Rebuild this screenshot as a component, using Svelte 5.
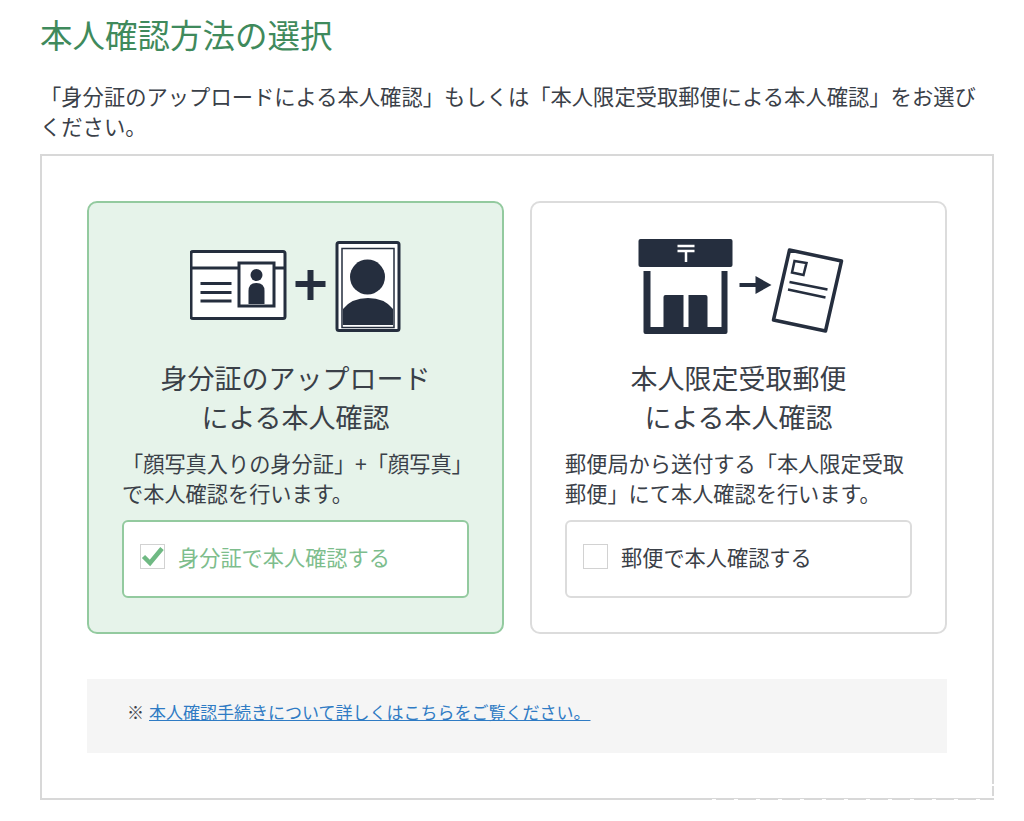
<script>
  const options = [
    {
      title: ['身分証のアップロード', 'による本人確認'],
      desc: ['「顔写真入りの身分証」+「顔写真」', 'で本人確認を行います。'],
      label: '身分証で本人確認する',
      checked: true
    },
    {
      title: ['本人限定受取郵便', 'による本人確認'],
      desc: ['郵便局から送付する「本人限定受取', '郵便」にて本人確認を行います。'],
      label: '郵便で本人確認する',
      checked: false
    }
  ];
</script>

<main class="page">
  <h1>本人確認方法の選択</h1>
  <p class="lead">「身分証のアップロードによる本人確認」もしくは「本人限定受取郵便による本人確認」をお選びください。</p>

  <section class="panel">
    <div class="cards">
      {#each options as opt}
        <div class="card" class:active={opt.checked}>
          <div class="icon">
            {#if opt.checked}
              <svg width="212" height="96" viewBox="190.500 238 212 96">
                <rect x="191.500" y="251.500" width="94" height="67" rx="2" fill="#fff" stroke="#252e3e" stroke-width="3" />
                <path d="M191 268H286" stroke="#252e3e" stroke-width="3" />
                <rect x="239.500" y="263" width="35" height="43" fill="#fff" stroke="#252e3e" stroke-width="3" />
                <circle cx="257" cy="275" r="6" fill="#252e3e" />
                <path d="M249 304V291q0-8 8-8t8 8V304Z" fill="#252e3e" />
                <path d="M201 283.500H232M201 292.500H232M201 301H232" stroke="#252e3e" stroke-width="3" />
                <path d="M296 284H326M311 270V300" stroke="#252e3e" stroke-width="6" />
                <rect x="337.500" y="242.500" width="62" height="88" rx="2" fill="#fff" stroke="#252e3e" stroke-width="3" />
                <rect x="342.500" y="248.500" width="52" height="79" fill="none" stroke="#252e3e" stroke-width="1.500" />
                <circle cx="368" cy="277" r="17.500" fill="#252e3e" />
                <path d="M343.500 325V309Q352 298 368.500 298T393.500 309V325Z" fill="#252e3e" />
              </svg>
            {:else}
              <svg width="212" height="96" viewBox="632.500 238 212 96">
                <rect x="638" y="239" width="94" height="28" rx="2" fill="#252e3e" />
                <path d="M677 246H694M677 251H694M685.500 251V262" stroke="#fff" stroke-width="2.500" fill="none" />
                <path d="M643 271H650V327H663V297q0-2 2-2H683V327H688V295H705q2 0 2 2V327H721V271H727V332q0 2-2 2H645q-2 0-2-2Z" fill="#252e3e" />
                <path d="M739 285H757" stroke="#252e3e" stroke-width="4" />
                <path d="M755 276L771 285L755 294Z" fill="#252e3e" />
                <path d="M789 250L841 261L825 331L773 320Z" fill="#fff" stroke="#252e3e" stroke-width="3.500" stroke-linejoin="round" />
                <path d="M794 261L806 263L803 275L791.500 272.500Z" fill="none" stroke="#252e3e" stroke-width="2.500" />
                <path d="M789 282L827 289.500M787.500 289.500L825 297.500" stroke="#252e3e" stroke-width="2.500" />
              </svg>
            {/if}
          </div>
          <h2>{opt.title[0]}<br />{opt.title[1]}</h2>
          <p class="desc">{opt.desc[0]}<br />{opt.desc[1]}</p>
          <div class="choice">
            <span class="box">
              {#if opt.checked}
                <svg width="23" height="23" viewBox="0 0 23 23">
                  <path d="M2.500 11.500L9 18L21 3.500" fill="none" stroke="#6fb983" stroke-width="4.500" />
                </svg>
              {/if}
            </span>
            <span>{opt.label}</span>
          </div>
        </div>
      {/each}
    </div>

    <div class="note">
      <span class="mark">※</span> <a href="#top">本人確認手続きについて詳しくはこちらをご覧ください。</a>
    </div>
  </section>
</main>

<style>
  :global(body) {
    margin: 0;
    background: #fff;
  }

  .page {
    padding: 0 30px 0 40px;
    font-family: "Noto Sans CJK JP", "Noto Sans", sans-serif;
    color: #3a4048;
  }

  h1 {
    margin: 0;
    padding-top: 11px;
    font-size: 32.500px;
    line-height: 46px;
    font-weight: 400;
    color: #3f8a5c;
  }

  .lead {
    margin: 24px 0 0;
    padding-right: 10px;
    font-size: 21.300px;
    line-height: 30px;
    height: 60px;
  }

  .panel {
    position: relative;
    box-sizing: border-box;
    margin-top: 13px;
    height: 646px;
    padding: 45px;
    border: 2px solid #d8d8d8;
  }

  .panel::after {
    content: "";
    position: absolute;
    right: -2px;
    bottom: -2px;
    width: 282px;
    height: 1px;
    background: repeating-linear-gradient(90deg, #fff 0 4px, transparent 4px 22px);
  }

  .panel::before {
    content: "";
    position: absolute;
    right: -2px;
    bottom: 0;
    width: 2px;
    height: 24px;
    background: repeating-linear-gradient(0deg, #fff 0 2px, transparent 2px 12px);
  }

  .cards {
    display: flex;
    gap: 26px;
  }

  .card {
    box-sizing: border-box;
    flex: 1 1 0;
    min-width: 0;
    height: 433px;
    padding: 0 33px;
    border: 2px solid #dcdcdc;
    border-radius: 10px;
    background: #fff;
  }

  .card.active {
    background: #e6f3ea;
    border-color: #93ca9f;
  }

  .icon {
    display: flex;
    justify-content: center;
    height: 96px;
    padding-top: 35px;
  }

  h2 {
    margin: 24px 0 0;
    font-size: 27px;
    line-height: 39px;
    font-weight: 400;
    text-align: center;
  }

  .desc {
    margin: 12px 0 0;
    font-size: 21.200px;
    line-height: 30px;
    white-space: nowrap;
  }

  .choice {
    box-sizing: border-box;
    display: flex;
    align-items: center;
    gap: 13px;
    height: 78px;
    margin-top: 12px;
    padding: 0 0 5px 16px;
    border: 2px solid #dcdcdc;
    border-radius: 6px;
    background: #fff;
    font-size: 21.200px;
  }

  .active .choice {
    border-color: #93ca9f;
    color: #7dbd8c;
  }

  .box {
    box-sizing: border-box;
    flex: none;
    width: 25px;
    height: 25px;
    border: 1px solid #d2d2d2;
    background: #fff;
  }

  .box svg {
    display: block;
  }

  .note {
    box-sizing: border-box;
    display: flex;
    align-items: center;
    gap: 5px;
    height: 74px;
    margin-top: 45px;
    padding: 0 0 10px 40px;
    background: #f5f5f5;
    font-size: 17px;
  }

  .note a {
    color: #2f7bc4;
  }
</style>
